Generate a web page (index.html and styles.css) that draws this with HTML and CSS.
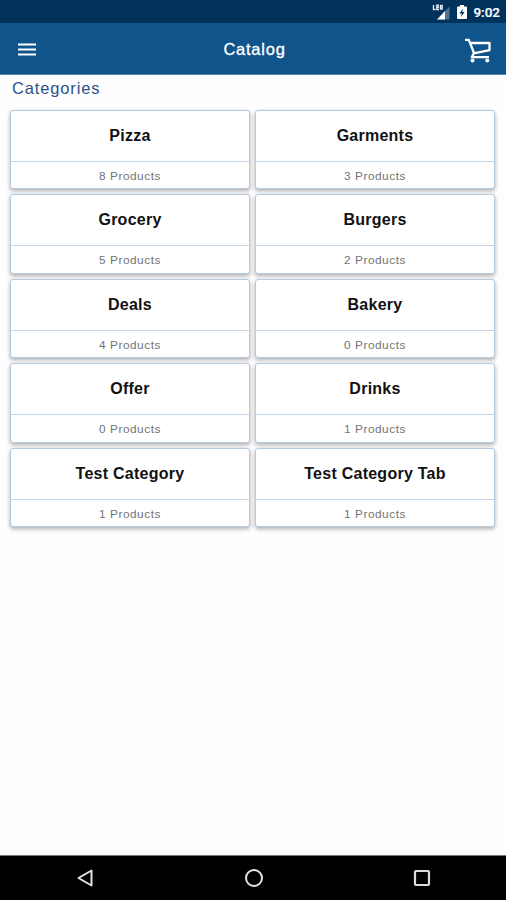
FILE: index.html
```
<!DOCTYPE html>
<html lang="en">
<head>
<meta charset="utf-8">
<title>Catalog</title>
<link rel="stylesheet" href="styles.css">
</head>
<body>
<div class="status">
  <svg class="signal" width="18" height="16" viewBox="0 0 18 16">
    <path d="M17.500 2.500v13H5z" fill="#4d7590"/><path d="M13 7v8.500H5z" fill="#fff"/>
    <path d="M1.500 1v4.500h2M7 1.300H4.800v4.200H7M4.800 3.300H7M8.500 1v4.500M8.500 1.400h1.600v3.700H8.500" fill="none" stroke="#e4ebf1" stroke-width="1.400"/>
  </svg>
  <svg class="battery" width="10" height="14" viewBox="0 0 10 14">
    <path d="M3 0h4v1.500h2q1 0 1 1V13q0 1-1 1H1q-1 0-1-1V2.500q0-1 1-1h2z" fill="#fff"/><path d="M6 3.500 2.500 8.500h2.200L4 12l3.600-5H5.300z" fill="#00325b"/>
  </svg>
  <span class="time">9:02</span>
</div>
<header class="bar">
  <svg class="menu" width="18" height="13" viewBox="0 0 18 13"><path d="M0 1.500h18M0 6.500h18M0 11.500h18" stroke="#fff" stroke-width="2.200"/></svg>
  <h1 class="title">Catalog</h1>
  <svg class="cart" width="26" height="25" viewBox="0 0 26 25">
    <path d="M0 1.800h3.800L9 15M5 5h19.500v7.200L8.800 15.300 6.800 19.200H24" fill="none" stroke="#fff" stroke-width="2.300" stroke-linejoin="round"/>
    <circle cx="7.500" cy="22.500" r="2" fill="#fff"/><circle cx="22.300" cy="22.500" r="2" fill="#fff"/>
  </svg>
</header>
<main class="content">
  <h2 class="heading">Categories</h2>
  <div class="grid">
    <article class="card"><h3 class="name">Pizza</h3><p class="count">8 Products</p></article>
    <article class="card"><h3 class="name">Garments</h3><p class="count">3 Products</p></article>
    <article class="card"><h3 class="name">Grocery</h3><p class="count">5 Products</p></article>
    <article class="card"><h3 class="name">Burgers</h3><p class="count">2 Products</p></article>
    <article class="card"><h3 class="name">Deals</h3><p class="count">4 Products</p></article>
    <article class="card"><h3 class="name">Bakery</h3><p class="count">0 Products</p></article>
    <article class="card"><h3 class="name">Offer</h3><p class="count">0 Products</p></article>
    <article class="card"><h3 class="name">Drinks</h3><p class="count">1 Products</p></article>
    <article class="card"><h3 class="name">Test Category</h3><p class="count">1 Products</p></article>
    <article class="card"><h3 class="name">Test Category Tab</h3><p class="count">1 Products</p></article>
  </div>
</main>
<nav class="nav">
  <svg width="18" height="20" viewBox="0 0 18 20"><path d="M15.500 2.500v15L2.500 10z" fill="none" stroke="#e4e4e4" stroke-width="2" stroke-linejoin="round"/></svg>
  <svg width="20" height="20" viewBox="0 0 20 20"><circle cx="10" cy="10" r="8" fill="none" stroke="#e4e4e4" stroke-width="2"/></svg>
  <svg width="18" height="20" viewBox="0 0 18 20"><rect x="2" y="3" width="14" height="14" rx="1" fill="none" stroke="#dcdcdc" stroke-width="2.200"/></svg>
</nav>
</body>
</html>
```
FILE: styles.css
```
* { box-sizing: border-box; }
body {
  margin: 0;
  height: 900px;
  display: flex;
  flex-direction: column;
  background: #fefefe;
  font-family: "Liberation Sans", sans-serif;
  overflow: hidden;
}
h1, h2, h3, p { margin: 0; font-weight: 400; }
svg { display: block; }
.status {
  height: 23px;
  flex: none;
  display: flex;
  justify-content: flex-end;
  align-items: center;
  padding: 0 6px 0 0;
  background: #00325b;
  color: #fff;
}
.signal { margin-right: 7px; }
.battery { margin-right: 6px; }
.time {
  font: 500 13.5px/20px Roboto, sans-serif;
  -webkit-text-stroke: .2px #fff;
}
.bar {
  height: 52px;
  flex: none;
  display: grid;
  grid-template-columns: 1fr auto 1fr;
  align-items: center;
  padding: 1px 15px 0 18px;
  background: #0f548b;
  border-bottom: 1px solid #5e86aa;
  color: #fff;
}
.title {
  font-size: 16.5px;
  line-height: 20px;
  letter-spacing: .75px;
  -webkit-text-stroke: .3px #fff;
}
.cart { justify-self: end; margin-top: 2px; }
.content { flex: 1; padding: 3px 10px 0; }
.heading {
  height: 20px;
  padding-left: 2px;
  margin-bottom: 12px;
  font-size: 16.5px;
  line-height: 20px;
  letter-spacing: .85px;
  color: #2c5288;
}
.grid {
  display: grid;
  grid-template-columns: 240px 240px;
  grid-auto-rows: 79.400px;
  gap: 5px;
}
.card {
  display: flex;
  flex-direction: column;
  border: 1px solid #b4cbe0;
  border-radius: 3px;
  background: #fff;
  box-shadow: 0 2px 4px rgba(0, 0, 0, .32);
  text-align: center;
}
.name {
  height: 51px;
  border-bottom: 1px solid #c2d5eb;
  font-size: 16px;
  font-weight: 700;
  line-height: 50px;
  letter-spacing: .25px;
  color: #111;
}
.count {
  font-size: 11.800px;
  line-height: 28px;
  letter-spacing: .55px;
  color: #737373;
}
.nav {
  height: 45px;
  flex: none;
  display: flex;
  justify-content: space-between;
  align-items: center;
  padding: 0 75px 0 76px;
  background: #000;
  border-top: 1px solid #777;
}
```
